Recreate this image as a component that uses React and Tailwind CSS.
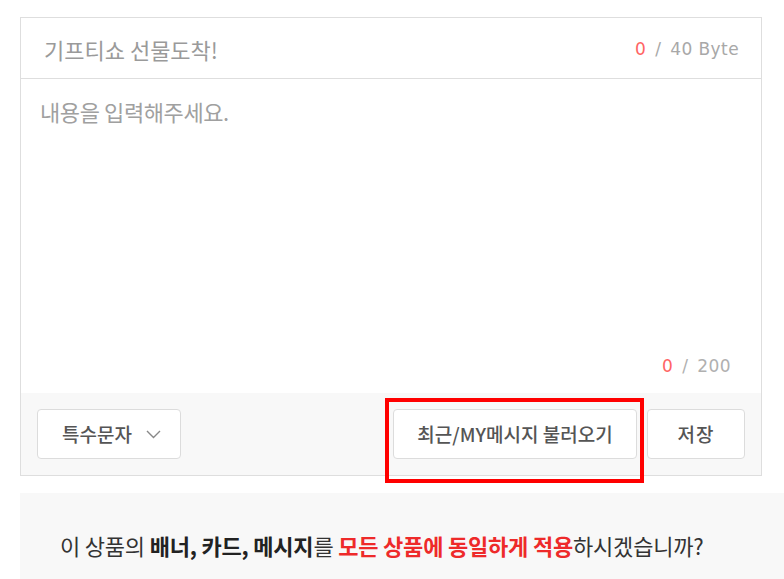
import React from "react";

const KR = { fontFamily: '"Noto Sans CJK KR", "Noto Sans", sans-serif' };

export default function App() {
  return (
    <div
      className="relative w-[784px] h-[579px] overflow-hidden bg-white"
      style={KR}
    >
      <div className="pt-[17px] pl-[20px]">
        <div className="w-[742px] border border-[#dedede]">
          <div className="h-[61px] border-b border-[#dedede] flex items-center justify-between pl-[23px] pr-[22px]">
            <span className="text-[22px] text-[#9a9a9a] leading-[30px] pt-[1px]">
              기프티쇼 선물도착!
            </span>
            <span className="pt-[3px] text-[17px] text-[#a8a8a8] tracking-[0.4px] [font-family:'DejaVu_Sans',sans-serif]">
              <span className="text-[#ff6464]">0</span>
              <span className="mx-[9px]">/</span>40 Byte
            </span>
          </div>
          <div className="h-[314px] flex flex-col justify-between pl-[19px] pr-[30px] pt-[17px] pb-[14px]">
            <span className="text-[22px] text-[#a0a0a0] tracking-[-0.4px] leading-[30px]">
              내용을 입력해주세요.
            </span>
            <span className="self-end text-[17px] text-[#b0b0b0] tracking-[0.4px] [font-family:'DejaVu_Sans',sans-serif]">
              <span className="text-[#ff6464]">0</span>
              <span className="mx-[9px]">/</span>200
            </span>
          </div>
          <div className="h-[82px] bg-[#f8f8f8] flex items-center justify-between pl-[16px] pr-[16px]">
            <button className="w-[144px] h-[50px] bg-white border border-[#dcdcdc] rounded-[4px] flex items-center pl-[24px] gap-[14px] text-[19px] font-medium text-[#555]">
              <span>특수문자</span>
              <svg width="15" height="9" viewBox="0 0 15 9" fill="none">
                <path d="M1 1l6.5 6.5L14 1" stroke="#888" strokeWidth="1.4" />
              </svg>
            </button>
            <div className="flex gap-[10px]">
              <button className="w-[244px] h-[50px] bg-white border border-[#dcdcdc] rounded-[4px] text-[19px] font-medium text-[#555]">
                최근/MY메시지 불러오기
              </button>
              <button className="w-[98px] h-[50px] bg-white border border-[#dcdcdc] rounded-[4px] text-[19px] font-medium text-[#555] tracking-[1px]">
                저장
              </button>
            </div>
          </div>
        </div>
        <div className="mt-[17px] h-[100px] bg-[#f8f8f8] pl-[40px] pt-[36px]">
          <p className="text-[22px] text-[#333] tracking-[-0.2px] leading-[32px]">
            이 상품의 <b className="font-bold text-[#222]">배너, 카드, 메시지</b>를{" "}
            <b className="font-bold text-[#ee2a2a]">모든 상품에 동일하게 적용</b>
            하시겠습니까?
          </p>
        </div>
      </div>
      <div className="absolute left-[385px] top-[398px] w-[259px] h-[85px] border-4 border-[#ff0000]" />
    </div>
  );
}
